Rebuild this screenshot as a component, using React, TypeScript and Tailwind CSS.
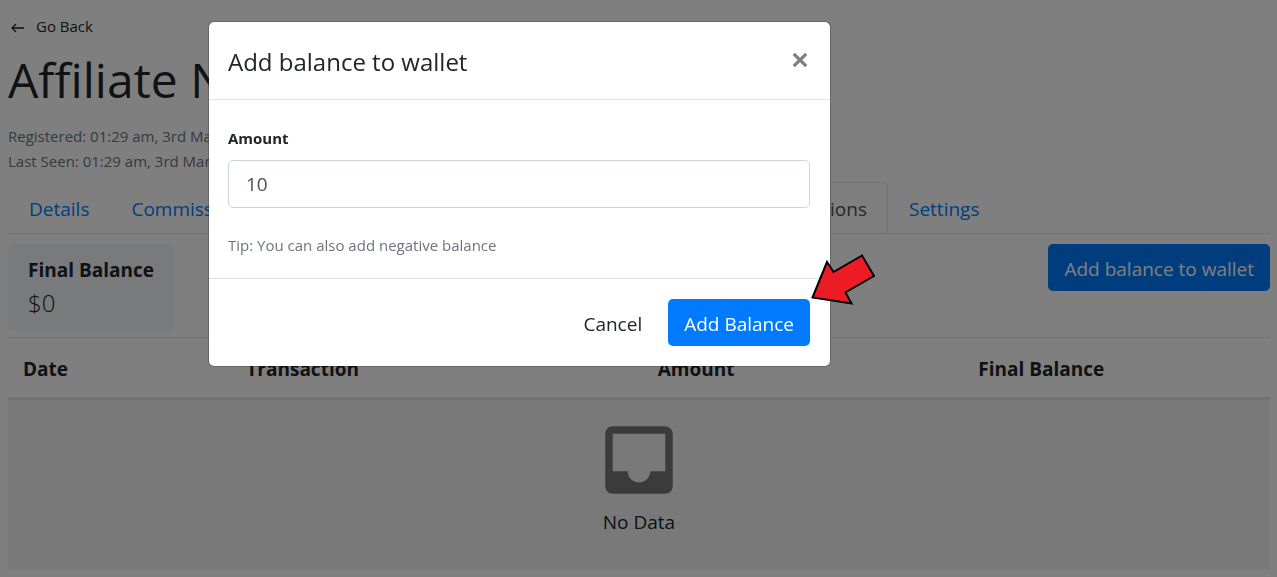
import React, { useState } from "react";
import { MdInbox } from "react-icons/md";

const linkTab = "block border border-transparent px-5 pt-[11px] pb-2 text-[#007bff]";

function Tabs() {
  return (
    <ul className="mt-2 flex border-b border-[#dee2e6] text-[19px] leading-[30px]">
      <li className="flex w-[880px] shrink-0">
        <ul className="-mb-px flex w-full">
          <li><a href="#details" className={linkTab}>Details</a></li>
          <li><a href="#commissions" className={linkTab}>Commissions</a></li>
          <li className="flex-1"><a href="#referrals" className={linkTab}>Referrals</a></li>
          <li className="flex-1"><a href="#payouts" className={linkTab}>Payouts</a></li>
          <li>
            <a
              href="#transactions"
              aria-current="page"
              className="block rounded-t-[5px] border border-[#dee2e6] border-b-white bg-white px-5 pt-[11px] pb-2 text-[#495057]"
            >
              Transactions
            </a>
          </li>
        </ul>
      </li>
      <li><a href="#settings" className={linkTab}>Settings</a></li>
    </ul>
  );
}

function TransactionsTable() {
  return (
    <table className="mt-[6px] w-full table-fixed border-t border-[#dee2e6] text-left text-[19px] leading-[30px]">
      <thead>
        <tr className="border-b-3 border-[#dee2e6]">
          <th className="w-[17.7%] px-[15px] pt-4 pb-[13px] font-bold">Date</th>
          <th className="w-[32.6%] px-[15px] pt-4 pb-[13px] font-bold">Transaction</th>
          <th className="w-[25.4%] px-[15px] pt-4 pb-[13px] font-bold">Amount</th>
          <th className="px-[15px] pt-4 pb-[13px] font-bold">Final Balance</th>
        </tr>
      </thead>
      <tbody>
        <tr className="bg-[#f2f2f2]">
          <td colSpan={4} className="px-4 pt-[15px] pb-[33px] text-center">
            <MdInbox size={90} className="mx-auto text-[#777777]" aria-hidden="true" />
            <p className="mt-[2px]">No Data</p>
          </td>
        </tr>
      </tbody>
    </table>
  );
}

function PointerArrow() {
  return (
    <svg
      className="absolute top-[231px] left-[601px]"
      width="68"
      height="56"
      viewBox="810 253 68 56"
      aria-hidden="true"
    >
      <path
        d="M812.5 297.5L827 262L833.500 272L862 255.500L874 276L845.500 292.500L851.500 303.500Z"
        fill="#ed1c24"
        stroke="#000"
        strokeWidth="2"
      />
    </svg>
  );
}

function WalletDialog() {
  const [amount, setAmount] = useState("10");
  return (
    <div className="fixed inset-0 bg-black/50 pt-[21px] pl-52">
      <div
        role="dialog"
        aria-labelledby="wallet-title"
        className="relative w-full max-w-[623px] rounded-md border border-black/20 bg-white bg-clip-padding"
      >
        <div className="flex items-start justify-between border-b border-[#dee2e6] pt-[22px] pr-5 pb-[19px] pl-[19px]">
          <h2 id="wallet-title" className="text-[24px] leading-9">Add balance to wallet</h2>
          <button type="button" aria-label="Close" className="p-0 text-[#7f7f7f]">
            <svg width="20" height="32" viewBox="0 0 20 32" aria-hidden="true">
              <path d="M3.800 9.800L16.200 22.200M16.200 9.800L3.800 22.200" stroke="currentColor" strokeWidth="3.200" />
            </svg>
          </button>
        </div>
        <div className="border-b border-[#dee2e6] pt-[26px] pr-5 pb-[21px] pl-[19px]">
          <label htmlFor="amount" className="block text-[15px] leading-6 font-bold">Amount</label>
          <input
            id="amount"
            type="text"
            value={amount}
            onChange={(e) => setAmount(e.target.value)}
            className="mt-[10px] block h-12 w-full rounded-[5px] border border-[#ced4da] px-[17px] text-[19px] text-[#495057]"
          />
          <p className="mt-[25px] text-[15px] leading-6 text-[#6c757d]">Tip: You can also add negative balance</p>
        </div>
        <div className="flex items-center justify-end gap-2.5 px-5 py-5 text-[19px] leading-[31px]">
          <button type="button" className="px-4 pt-[10px] pb-[6px]">Cancel</button>
          <button type="button" className="rounded-[5px] bg-[#007bff] px-4 pt-[10px] pb-[6px] text-white">Add Balance</button>
        </div>
        <PointerArrow />
      </div>
    </div>
  );
}

export default function App() {
  return (
    <div className="min-h-screen bg-white pt-[14px] pr-[7px] pb-[7px] pl-2 font-['Open_Sans','Noto_Sans',sans-serif] text-[#212529]">
      <a href="#back" className="flex w-fit items-center gap-2.5 pl-0.5 text-[15px] leading-6">
        <svg width="16" height="16" viewBox="0 0 16 16" fill="none" stroke="currentColor" strokeWidth="1.300" className="mt-1" aria-hidden="true">
          <path d="M14 8H2M6 4L2 8L6 12" />
        </svg>
        Go Back
      </a>
      <h1 className="mt-3 text-[48px] leading-[60px] whitespace-nowrap">Affiliate Name</h1>
      <div className="mt-[14px] text-[15px] leading-[25px] text-[#6c757d]">
        <p>Registered: 01:29 am, 3rd March 2021</p>
        <p>Last Seen: 01:29 am, 3rd March 2021</p>
      </div>
      <Tabs />
      <div className="mt-2.5 flex items-start justify-between">
        <div className="rounded-[5px] bg-[#f0f4f8] px-5 pt-[11px] pb-2.5">
          <p className="text-[19px] leading-[30px] font-bold">Final Balance</p>
          <p className="text-[24px] leading-9 font-light">$0</p>
        </div>
        <button type="button" className="rounded-[5px] bg-[#007bff] px-4 pt-[10px] pb-[6px] text-[19px] leading-[31px] text-white">
          Add balance to wallet
        </button>
      </div>
      <TransactionsTable />
      <WalletDialog />
    </div>
  );
}
